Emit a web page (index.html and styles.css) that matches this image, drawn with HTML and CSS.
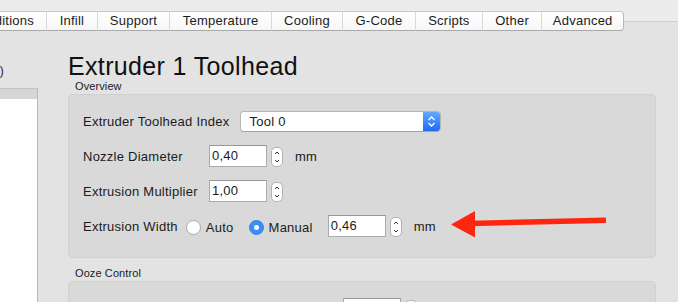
FILE: index.html
```html
<!DOCTYPE html>
<html lang="en">
<head>
  <meta charset="UTF-8" />
  <title>Extruder 1 Toolhead</title>
  <link rel="stylesheet" href="styles.css">
</head>
<body>

  <nav class="tabs">
    <div class="tab tab-first">Additions</div>
    <div class="tab">Infill</div>
    <div class="tab">Support</div>
    <div class="tab">Temperature</div>
    <div class="tab">Cooling</div>
    <div class="tab">G-Code</div>
    <div class="tab">Scripts</div>
    <div class="tab">Other</div>
    <div class="tab tab-last">Advanced</div>
  </nav>

  <div class="pane">
    <aside class="side">
      <div class="side-title"><span>Extruder List (1)</span></div>
      <div class="list">
        <div class="list-head"></div>
      </div>
    </aside>

    <main class="content">
      <h1>Extruder 1 Toolhead</h1>

      <div class="legend">Overview</div>
      <section class="group">
        <div class="row">
          <label class="label">Extruder Toolhead Index</label>
          <div class="select">
            <span class="select-value">Tool 0</span>
            <span class="select-btn">
              <svg width="9" height="13" viewBox="0 0 9 13"><path d="M1.5 5 L4.5 2 L7.5 5 M1.5 8 L4.5 11 L7.5 8" fill="none" stroke="#fff" stroke-width="1.3"/></svg>
            </span>
          </div>
        </div>

        <div class="row">
          <label class="label label-fixed">Nozzle Diameter</label>
          <div class="input">0,40</div>
          <div class="stepper">
            <svg width="10" height="18" viewBox="0 0 10 18"><path d="M3 6 L5 4 L7 6 M3 12 L5 14 L7 12" fill="none" stroke="#333" stroke-width="1"/></svg>
          </div>
          <span class="unit">mm</span>
        </div>

        <div class="row">
          <label class="label label-fixed">Extrusion Multiplier</label>
          <div class="input">1,00</div>
          <div class="stepper">
            <svg width="10" height="18" viewBox="0 0 10 18"><path d="M3 6 L5 4 L7 6 M3 12 L5 14 L7 12" fill="none" stroke="#333" stroke-width="1"/></svg>
          </div>
        </div>

        <div class="row">
          <label class="label label-radio">Extrusion Width</label>
          <span class="radio"></span>
          <span class="radio-text">Auto</span>
          <span class="radio radio-on"></span>
          <span class="radio-text">Manual</span>
          <div class="input input-width">0,46</div>
          <div class="stepper">
            <svg width="10" height="18" viewBox="0 0 10 18"><path d="M3 6 L5 4 L7 6 M3 12 L5 14 L7 12" fill="none" stroke="#333" stroke-width="1"/></svg>
          </div>
          <span class="unit">mm</span>
        </div>
      </section>

      <div class="legend legend-next">Ooze Control</div>
      <section class="group group-ooze">
        <div class="row">
          <label class="label label-wide">Retraction Distance</label>
          <div class="input">1,00</div>
          <div class="stepper"></div>
          <span class="unit">mm</span>
        </div>
      </section>
    </main>
  </div>

  <!-- annotation arrow drawn over the screenshot -->
  <svg class="arrow" width="678" height="302" viewBox="0 0 678 302">
    <line x1="470" y1="223.5" x2="606" y2="220.3" stroke="#fd2710" stroke-width="5.5"/>
    <polygon points="451,224.5 475,211 475,237.5" fill="#fd2710"/>
  </svg>

</body>
</html>
```

FILE: styles.css
```css
body {
  margin: 0;
  width: 678px;
  height: 302px;
  overflow: hidden;
  position: relative;
  background: #ececec;
  font-family: 'Liberation Sans', Arial, sans-serif;
  font-size: 13px;
  letter-spacing: 0.25px;
  color: #1b1b1b;
}

/* tab strip */
.tabs {
  display: flex;
  position: relative;
  z-index: 1;
  margin: 11px 0 -10px -34px;
  height: 20px;
  width: max-content;
}

.tab {
  box-sizing: border-box;
  height: 20px;
  line-height: 18px;
  padding: 0 12.3px;
  background: linear-gradient(#ffffff, #f7f7f7);
  border-top: 1px solid #c6c6c6;
  border-bottom: 1px solid #a9a9a9;
  border-right: 1px solid #d9d9d9;
  white-space: nowrap;
}

.tab-last {
  padding: 0 10.5px;
  border-right: 1px solid #b9b9b9;
  border-radius: 0 4px 4px 0;
}

/* main pane */
.pane {
  display: flex;
  margin-left: -1px;
  width: 678px;
  height: 300px;
  background: #e3e3e3;
  border: 1px solid #d0d0d0;
}

.side {
  width: 38px;
  padding-top: 43px;
  flex-shrink: 0;
}

.side-title {
  width: 4px;
  height: 13px;
  overflow: hidden;
  display: flex;
  justify-content: flex-end;
  white-space: nowrap;
  font-size: 12px;
  line-height: 13px;
  margin-bottom: 10px;
}

.list {
  height: 220px;
  background: #fff;
  border-top: 1px solid #c2c2c2;
  border-right: 1px solid #b9b9b9;
}

.list-head {
  height: 10px;
  background: #d6d6d6;
}

.content {
  width: 588px;
  margin-left: 30px;
  padding-top: 30px;
}

h1 {
  margin: 0;
  font-size: 25px;
  line-height: 28px;
  font-weight: normal;
  letter-spacing: 0.35px;
  color: #111;
}

.legend {
  font-size: 11px;
  line-height: 12px;
  letter-spacing: 0.1px;
  padding-left: 7px;
  margin-bottom: 2px;
}

.legend-next {
  margin-top: 9px;
}

.group {
  display: flex;
  flex-direction: column;
  gap: 13px;
  background: #d9d9d9;
  border: 1px solid #d0d0d0;
  border-radius: 5px;
  padding: 15px 14px 20px;
}

.group-ooze {
  padding-top: 16px;
}

.row {
  display: flex;
  align-items: center;
  height: 22px;
}

.label {
  margin-right: 11px;
  white-space: nowrap;
}

.label-fixed {
  width: 126px;
  margin-right: 0;
}

.label-radio {
  margin-right: 8px;
}

.label-wide {
  width: 260px;
  margin-right: 0;
}

.select {
  display: flex;
  width: 201px;
  height: 21px;
  box-sizing: border-box;
  background: #fff;
  border: 1px solid #b6b6b6;
  border-bottom-color: #a3a3a3;
  border-radius: 4px;
  overflow: hidden;
}

.select-value {
  flex: 1;
  padding-left: 8px;
  line-height: 19px;
}

.select-btn {
  width: 17px;
  display: flex;
  align-items: center;
  justify-content: center;
  background: linear-gradient(#64a8fc, #1c6ef2);
}

.input {
  box-sizing: border-box;
  width: 58px;
  height: 22px;
  padding: 0 2px;
  line-height: 20px;
  background: #fff;
  border: 1px solid #ababab;
  border-top-color: #979797;
}

.stepper {
  box-sizing: border-box;
  width: 12px;
  height: 20px;
  margin: 2px 0 0 4px;
  background: #fff;
  border: 1px solid #b2b2b2;
  border-radius: 5px;
  display: flex;
  align-items: center;
  justify-content: center;
  overflow: hidden;
}

.unit {
  margin-left: 12px;
}

.radio {
  box-sizing: border-box;
  width: 15px;
  height: 15px;
  margin-top: 3px;
  border-radius: 50%;
  background: #fff;
  border: 1px solid #a9a9a9;
  display: flex;
  align-items: center;
  justify-content: center;
  flex-shrink: 0;
}

.radio-on {
  margin-left: 15px;
  background: #3a8ef7;
  border-color: #3183ee;
}

.radio-on::after {
  content: '';
  width: 5px;
  height: 5px;
  border-radius: 50%;
  background: #fff;
}

.radio-text {
  margin: 3px 0 0 5px;
}

.input-width {
  margin-left: 15px;
}

/* annotation overlay */
.arrow {
  position: absolute;
  left: 0;
  top: 0;
}
```
